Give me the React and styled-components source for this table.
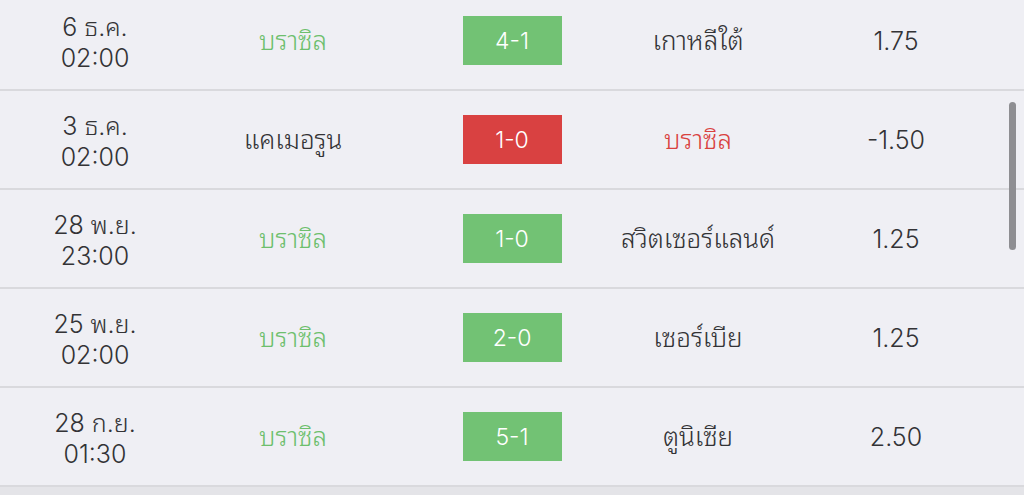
import React from 'react'
import styled, { createGlobalStyle } from 'styled-components'

const GlobalStyle = createGlobalStyle`
  html, body {
    margin: 0;
    padding: 0;
    background: #e4e4e8;
    overflow: hidden;
  }
  body {
    font-family: Inter, "Noto Sans Thai Looped", Loma, Garuda, "Noto Sans", sans-serif;
    font-weight: 300;
  }
`

const Screen = styled.div`
  position: relative;
  width: 1024px;
  height: 495px;
  overflow: hidden;
  background: #e4e4e8;
`

const List = styled.div`
  margin-top: -8px;
  background: #efeff4;
`

const Row = styled.div`
  display: grid;
  grid-template-columns: 190px 206px 232px 140px 256px;
  height: 97px;
  align-items: center;
  border-bottom: 2px solid #d9d9dd;
`

const Cell = styled.div`
  display: flex;
  justify-content: center;
  align-items: center;
  white-space: nowrap;
  min-width: 0;
`

const DateText = styled.div`
  text-align: center;
  font-size: 25px;
  line-height: 31px;
  padding-top: 4px;
  color: #333336;
`

const Team = styled.span`
  font-size: 26px;
  padding-bottom: 6px;
  color: ${p => (p.$tone === 'win' ? '#6dbf6d' : p.$tone === 'lose' ? '#d9423f' : '#333336')};
`

const Score = styled.div`
  width: 99px;
  height: 49px;
  display: flex;
  align-items: center;
  justify-content: center;
  font-size: 23px;
  color: #fff;
  background: ${p => (p.$lose ? '#d94141' : '#72c274')};
`

const Odds = styled.span`
  font-size: 25px;
  color: #333336;
`

const ScrollThumb = styled.div`
  position: absolute;
  left: 1009px;
  top: 102px;
  width: 7px;
  height: 148px;
  border-radius: 4px;
  background: #8e8e92;
`

const matches = [
  { day: '6 ธ.ค.', time: '02:00', home: 'บราซิล', away: 'เกาหลีใต้', score: '4-1', odds: '1.75', homeWin: true },
  { day: '3 ธ.ค.', time: '02:00', home: 'แคเมอรูน', away: 'บราซิล', score: '1-0', odds: '-1.50', homeWin: false },
  { day: '28 พ.ย.', time: '23:00', home: 'บราซิล', away: 'สวิตเซอร์แลนด์', score: '1-0', odds: '1.25', homeWin: true },
  { day: '25 พ.ย.', time: '02:00', home: 'บราซิล', away: 'เซอร์เบีย', score: '2-0', odds: '1.25', homeWin: true },
  { day: '28 ก.ย.', time: '01:30', home: 'บราซิล', away: 'ตูนิเซีย', score: '5-1', odds: '2.50', homeWin: true },
]

const App = () => {
  return (
    <Screen>
      <GlobalStyle />
      <List>
        {matches.map((m, i) => (
          <Row key={i}>
            <Cell>
              <DateText>
                {m.day}
                <br />
                {m.time}
              </DateText>
            </Cell>
            <Cell>
              <Team $tone={m.homeWin ? 'win' : 'plain'}>{m.home}</Team>
            </Cell>
            <Cell>
              <Score $lose={!m.homeWin}>{m.score}</Score>
            </Cell>
            <Cell>
              <Team $tone={m.homeWin ? 'plain' : 'lose'}>{m.away}</Team>
            </Cell>
            <Cell>
              <Odds>{m.odds}</Odds>
            </Cell>
          </Row>
        ))}
      </List>
      <ScrollThumb />
    </Screen>
  )
}

export default App
